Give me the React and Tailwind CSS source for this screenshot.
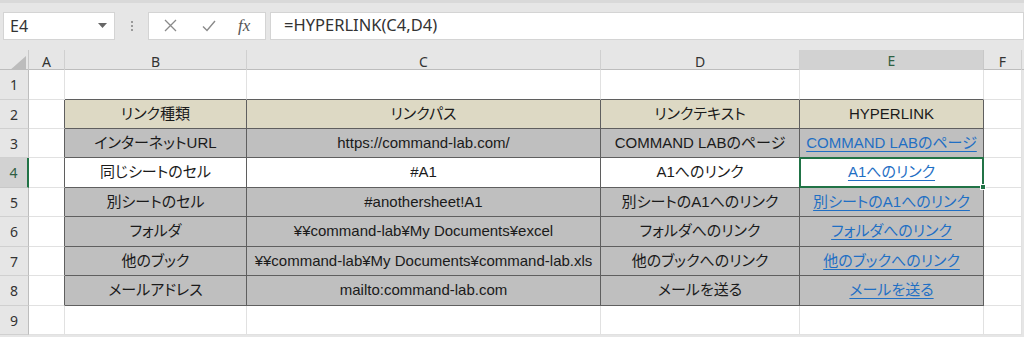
import React from 'react';

// 列幅: 行見出し, A, B, C, D, E, F, 余白
const GRID = 'grid grid-cols-[29px_36px_182px_354px_199px_184px_38px_1fr]';
const ROW_H = ['h-[30px]', 'h-[29px]', 'h-[29px]', 'h-[30px]', 'h-[29px]', 'h-[30px]', 'h-[29px]', 'h-[30px]', 'h-[29px]'];

const rows = [
  { fill: 'bg-[#ddd9c4]', cells: ['リンク種類', 'リンクパス', 'リンクテキスト', 'HYPERLINK'], header: true },
  { fill: 'bg-[#bfbfbf]', cells: ['インターネットURL', 'https://command-lab.com/', 'COMMAND LABのページ', 'COMMAND LABのページ'] },
  { fill: 'bg-white', cells: ['同じシートのセル', '#A1', 'A1へのリンク', 'A1へのリンク'], selected: true },
  { fill: 'bg-[#bfbfbf]', cells: ['別シートのセル', '#anothersheet!A1', '別シートのA1へのリンク', '別シートのA1へのリンク'] },
  { fill: 'bg-[#bfbfbf]', cells: ['フォルダ', '¥¥command-lab¥My Documents¥excel', 'フォルダへのリンク', 'フォルダへのリンク'] },
  { fill: 'bg-[#bfbfbf]', cells: ['他のブック', '¥¥command-lab¥My Documents¥command-lab.xls', '他のブックへのリンク', '他のブックへのリンク'] },
  { fill: 'bg-[#bfbfbf]', cells: ['メールアドレス', 'mailto:command-lab.com', 'メールを送る', 'メールを送る'] },
];

const FormulaBar = () => (
  <div className="h-[50px] bg-[#e6e6e6] flex flex-col">
    <div className="h-[3px] bg-[#d9d9d9]" />
    <div className="flex items-center pt-[7px] h-[38px]">
      <div className="ml-[3px] w-[112px] h-[28px] bg-white border border-[#d4d4d4] flex items-center justify-between pl-[6px] pr-[7px]">
        <span className="text-[16px] text-[#333] font-['Noto_Sans',sans-serif]">E4</span>
        <svg width="9" height="5" viewBox="0 0 9 5"><path d="M0 0h9L4.5 5z" fill="#666" /></svg>
      </div>
      <div className="w-[33px] flex flex-col items-center gap-[2px]">
        <span className="w-[2px] h-[2px] bg-[#9a9a9a]" />
        <span className="w-[2px] h-[2px] bg-[#9a9a9a]" />
        <span className="w-[2px] h-[2px] bg-[#9a9a9a]" />
      </div>
      <div className="w-[118px] h-[28px] bg-white border border-[#d4d4d4] flex items-center">
        <svg className="ml-[15px]" width="13" height="13" viewBox="0 0 13 13"><path d="M1 1l11 11M12 1L1 12" stroke="#8a8a8a" strokeWidth="1.3" /></svg>
        <svg className="ml-[25px]" width="14" height="12" viewBox="0 0 14 12"><path d="M1 6.5l4 4L13 1" stroke="#8a8a8a" strokeWidth="1.4" fill="none" /></svg>
        <span className="ml-[22px] text-[17px] italic text-[#555] font-['Liberation_Serif',serif]">fx</span>
      </div>
      <div className="ml-[4px] flex-1 h-[28px] bg-white border border-[#d4d4d4] flex items-center pl-[13px]">
        <span className="text-[16.5px] text-[#333] font-['Noto_Sans',sans-serif]">=HYPERLINK(C4,D4)</span>
      </div>
    </div>
  </div>
);

const ColumnHeaders = () => (
  <div className={`${GRID} h-[20px] bg-[#e6e6e6] border-b border-[#bdbdbd] font-['Noto_Sans',sans-serif] text-[14px] text-[#333]`}>
    <div className="border-r border-[#c8c8c8] flex items-end justify-end pr-[2px] pb-[2px]">
      <svg width="17" height="15" viewBox="0 0 17 15"><path d="M17 0v15H0z" fill="#bcbcbc" /></svg>
    </div>
    {['A', 'B', 'C', 'D', 'E', 'F'].map(c => (
      <div
        key={c}
        className={
          c === 'E'
            ? 'bg-[#d2d2d2] border-r border-[#c8c8c8] border-b-2 border-b-[#217346] flex items-center justify-center text-[#2f5f44]'
            : 'border-r border-[#d0d0d0] flex items-center justify-center'
        }
      >
        {c}
      </div>
    ))}
    <div />
  </div>
);

const Cell = ({ children, className }) => (
  <div className={`flex items-center justify-center whitespace-nowrap overflow-visible ${className}`}>{children}</div>
);

const Sheet = () => (
  <div className="font-['Liberation_Sans','Noto_Sans_CJK_JP',sans-serif] text-[15px] text-[#1a1a1a] [font-feature-settings:'palt']">
    {Array.from({ length: 9 }).map((_, i) => {
      const n = i + 1;
      const data = n >= 2 && n <= 8 ? rows[n - 2] : null;
      const selected = data && data.selected;
      return (
        <div key={n} className={`${GRID} ${ROW_H[i]}`}>
          <div
            className={
              selected
                ? 'bg-[#d2d2d2] border-b border-[#c8c8c8] border-r-2 border-r-[#217346] flex items-center justify-center text-[14px] text-[#2f5f44] font-["Noto_Sans",sans-serif]'
                : 'bg-[#e6e6e6] border-b border-[#d0d0d0] border-r border-r-[#bdbdbd] flex items-center justify-center text-[14px] text-[#333] font-["Noto_Sans",sans-serif]'
            }
          >
            {n}
          </div>
          <div className={`bg-white border-b border-[#e1e1e1] border-r ${data ? 'border-r-[#5f5f5f]' : 'border-r-[#e1e1e1]'}`} />
          {data ? (
            <>
              <Cell className={`${data.fill} border-r border-b border-[#5f5f5f]`}>{data.cells[0]}</Cell>
              <Cell className={`${data.fill} border-r border-b border-[#5f5f5f]`}>{data.cells[1]}</Cell>
              <Cell className={`${data.fill} border-r border-b border-[#5f5f5f]`}>{data.cells[2]}</Cell>
              <Cell className={`${data.fill} border-r border-b border-[#5f5f5f] relative`}>
                {data.header ? (
                  data.cells[3]
                ) : (
                  <span className="text-[#1f6fc4] underline underline-offset-[3px]">{data.cells[3]}</span>
                )}
                {selected && (
                  <div className="absolute z-10 -top-[1px] -left-[1px] -right-[1px] -bottom-[1px] border-2 border-[#217346]">
                    <div className="absolute -right-[4px] -bottom-[4px] w-[6px] h-[6px] bg-[#217346] border border-white" />
                  </div>
                )}
              </Cell>
            </>
          ) : (
            <>
              {[0, 1, 2, 3].map(k => (
                <div
                  key={k}
                  className={`bg-white border-r border-[#e1e1e1] border-b ${n === 1 ? 'border-b-[#5f5f5f]' : 'border-b-[#e1e1e1]'}`}
                />
              ))}
            </>
          )}
          <div className="bg-white border-r border-b border-[#e1e1e1]" />
          <div className="bg-[#e6e6e6]" />
        </div>
      );
    })}
  </div>
);

export default function App() {
  return (
    <div className="w-[1024px] h-[337px] overflow-hidden bg-[#e6e6e6]">
      <FormulaBar />
      <ColumnHeaders />
      <Sheet />
    </div>
  );
}
